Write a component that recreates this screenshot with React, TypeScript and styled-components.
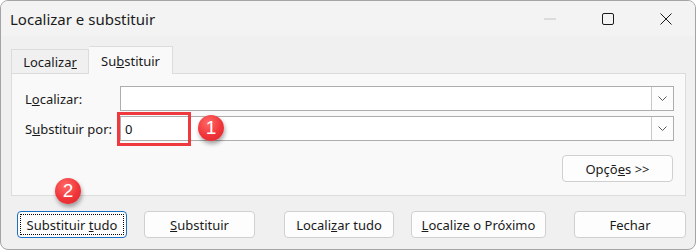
import React from 'react';
import styled, { createGlobalStyle } from 'styled-components';

const GlobalStyle = createGlobalStyle`
    html, body {
        margin: 0;
        padding: 0;
        background: #ffffff;
    }
    body {
        font-family: 'Noto Sans', 'Segoe UI', sans-serif;
        color: #1a1a1a;
    }
`;

const Window = styled.div`
    width: 696px;
    height: 250px;
    box-sizing: border-box;
    border: 1px solid #a4a4a4;
    border-radius: 8px;
    background: #f0f0f0;
    overflow: hidden;
    display: flex;
    flex-direction: column;
`;

const TitleBar = styled.div`
    height: 35px;
    flex: none;
    display: flex;
    align-items: center;
    background: #f3f3f3;
    padding-left: 9px;
`;

const Title = styled.div`
    flex: 1;
    font-size: 15px;
    color: #1b1b1b;
`;

const Controls = styled.div`
    display: flex;
    align-self: stretch;
`;

const ControlButton = styled.div`
    width: 58px;
    display: flex;
    align-items: center;
    justify-content: center;
`;

const Body = styled.div`
    flex: 1;
    padding: 11px 9px 0 10px;
    display: flex;
    flex-direction: column;
`;

const TabRow = styled.div`
    display: flex;
    align-items: flex-end;
    height: 27px;
    margin-bottom: -1px;
    position: relative;
    z-index: 1;
`;

const Tab = styled.div<{ $active?: boolean; $w: number }>`
    width: ${(p) => p.$w}px;
    height: ${(p) => (p.$active ? 28 : 25)}px;
    box-sizing: border-box;
    display: flex;
    align-items: center;
    justify-content: center;
    font-size: 13px;
    border: 1px solid #dcdcdc;
    border-bottom: ${(p) => (p.$active ? 'none' : '1px solid #dcdcdc')};
    border-left: ${(p) => (p.$active ? 'none' : '1px solid #dcdcdc')};
    background: ${(p) => (p.$active ? '#f9f9f9' : '#f0f0f0')};
    padding-top: ${(p) => (p.$active ? 0 : 1)}px;
`;

const Panel = styled.div`
    height: 123px;
    box-sizing: border-box;
    border: 1px solid #dcdcdc;
    background: #f9f9f9;
    padding: 12px 11px 0 13px;
    display: flex;
    flex-direction: column;
`;

const FieldGrid = styled.div`
    display: grid;
    grid-template-columns: 95px 1fr;
    row-gap: 5px;
    align-items: center;
`;

const Label = styled.div`
    font-size: 13px;
    color: #1a1a1a;
`;

const ComboWrap = styled.div`
    position: relative;
`;

const Combo = styled.div`
    height: 25px;
    box-sizing: border-box;
    border: 1px solid #adadad;
    background: #ffffff;
    display: flex;
    align-items: stretch;
`;

const ComboText = styled.div`
    flex: 1;
    padding-left: 4px;
    font-size: 13px;
    display: flex;
    align-items: center;
    color: #111;
`;

const DropButton = styled.div`
    width: 21px;
    border-left: 1px solid #c8c8c8;
    background: #fdfdfd;
    display: flex;
    align-items: center;
    justify-content: center;
`;

const Highlight = styled.div`
    position: absolute;
    left: -3px;
    top: -4px;
    width: 74px;
    height: 34px;
    box-sizing: border-box;
    border: 3px solid #ee3a3f;
    pointer-events: none;
`;

const Badge = styled.div<{ $left: number; $top: number }>`
    position: absolute;
    left: ${(p) => p.$left}px;
    top: ${(p) => p.$top}px;
    width: 26px;
    height: 26px;
    border-radius: 50%;
    background: radial-gradient(circle at 40% 30%, #ff6a66 0%, #f0353a 55%, #d8262c 100%);
    box-shadow: 1px 3px 4px rgba(0, 0, 0, 0.35);
    color: #ffffff;
    font-family: 'Liberation Sans', 'Noto Sans', sans-serif;
    font-size: 19px;
    display: flex;
    align-items: center;
    justify-content: center;
    z-index: 2;
`;

const OptionsRow = styled.div`
    display: flex;
    justify-content: flex-end;
    margin-top: 14px;
    padding-right: 1px;
`;

const Button = styled.div<{ $w: number; $ml?: number; $focused?: boolean }>`
    position: relative;
    width: ${(p) => p.$w}px;
    height: 27px;
    margin-left: ${(p) => p.$ml ?? 0}px;
    box-sizing: border-box;
    border: 1px solid ${(p) => (p.$focused ? '#1a6fc4' : '#d0d0d0')};
    border-radius: 4px;
    background: #fdfdfd;
    font-size: 13px;
    color: #1a1a1a;
    display: flex;
    align-items: center;
    justify-content: center;
    outline: ${(p) => (p.$focused ? '1px dotted #000' : 'none')};
    outline-offset: -4px;
`;

const ButtonLabel = styled.span`
    white-space: pre;
`;

const ButtonRow = styled.div`
    display: flex;
    margin-top: 15px;
`;

const Chevron = () => (
    <svg width="9" height="5" viewBox="0 0 9 5">
        <path d="M0.5 0.5 L4.5 4.5 L8.5 0.5" fill="none" stroke="#5a5a5a" strokeWidth="1" />
    </svg>
);

export default function App() {
    return (
        <>
            <GlobalStyle />
            <Window>
                <TitleBar>
                    <Title>Localizar e substituir</Title>
                    <Controls>
                        <ControlButton>
                            <svg width="12" height="2" viewBox="0 0 12 2">
                                <line x1="0" y1="1" x2="12" y2="1" stroke="#c4c4c4" strokeWidth="1" />
                            </svg>
                        </ControlButton>
                        <ControlButton>
                            <svg width="12" height="12" viewBox="0 0 12 12">
                                <rect x="0.5" y="0.5" width="11" height="11" rx="1.5" fill="none" stroke="#1a1a1a" strokeWidth="1" />
                            </svg>
                        </ControlButton>
                        <ControlButton>
                            <svg width="12" height="12" viewBox="0 0 12 12">
                                <path d="M0.5 0.5 L11.5 11.5 M11.5 0.5 L0.5 11.5" stroke="#1a1a1a" strokeWidth="1" />
                            </svg>
                        </ControlButton>
                    </Controls>
                </TitleBar>
                <Body>
                    <TabRow>
                        <Tab $w={78}>
                            <ButtonLabel>
                                Localiza<u>r</u>
                            </ButtonLabel>
                        </Tab>
                        <Tab $w={84} $active>
                            <ButtonLabel>
                                Su<u>b</u>stituir
                            </ButtonLabel>
                        </Tab>
                    </TabRow>
                    <Panel>
                        <FieldGrid>
                            <Label>
                                L<u>o</u>calizar:
                            </Label>
                            <Combo>
                                <ComboText />
                                <DropButton>
                                    <Chevron />
                                </DropButton>
                            </Combo>
                            <Label>
                                S<u>u</u>bstituir por:
                            </Label>
                            <ComboWrap>
                                <Combo>
                                    <ComboText>0</ComboText>
                                    <DropButton>
                                        <Chevron />
                                    </DropButton>
                                </Combo>
                                <Highlight />
                                <Badge $left={78} $top={-1}>1</Badge>
                            </ComboWrap>
                        </FieldGrid>
                        <OptionsRow>
                            <Button $w={111}>
                                <ButtonLabel>
                                    Opçõ<u>e</u>s &gt;&gt;
                                </ButtonLabel>
                            </Button>
                        </OptionsRow>
                    </Panel>
                    <ButtonRow>
                        <Button $w={110} $ml={6} $focused>
                            <ButtonLabel>
                                Substituir <u>t</u>udo
                            </ButtonLabel>
                            <Badge $left={37} $top={-34}>2</Badge>
                        </Button>
                        <Button $w={111} $ml={17}>
                            <ButtonLabel>
                                <u>S</u>ubstituir
                            </ButtonLabel>
                        </Button>
                        <Button $w={110} $ml={29}>
                            <ButtonLabel>
                                Locali<u>z</u>ar tudo
                            </ButtonLabel>
                        </Button>
                        <Button $w={135} $ml={17}>
                            <ButtonLabel>
                                <u>L</u>ocalize o Próximo
                            </ButtonLabel>
                        </Button>
                        <Button $w={112} $ml={28}>
                            <ButtonLabel>Fechar</ButtonLabel>
                        </Button>
                    </ButtonRow>
                </Body>
            </Window>
        </>
    );
}
